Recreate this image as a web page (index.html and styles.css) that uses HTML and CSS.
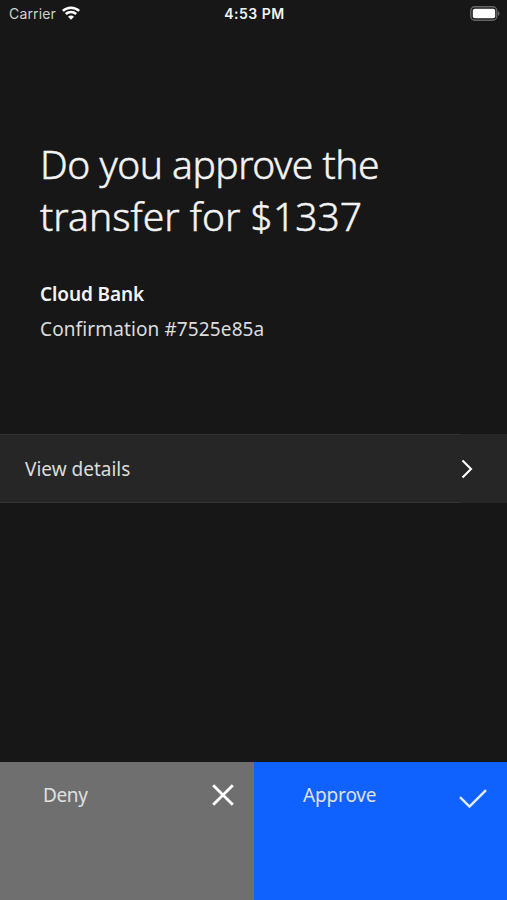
FILE: index.html
```html
<!DOCTYPE html>
<html lang="en">
<head>
    <meta charset="UTF-8">
    <meta name="viewport" content="width=device-width, initial-scale=1.0">
    <title>Approve transfer</title>
    <link rel="stylesheet" href="styles.css">
</head>
<body>
    <div class="screen">
        <div class="status-bar">
            <div class="carrier">
                <span class="carrier-name">Carrier</span>
                <svg class="wifi" width="18" height="14" viewBox="0 0 18 14">
                    <path d="M.8 4.9C5.3.6 12.7.6 17.2 4.9M3.8 8c3-2.8 7.4-2.8 10.4 0" fill="none" stroke="#fff" stroke-width="2.5"/>
                    <path d="M9 13.8L6 10.8c1.6-1.6 4.4-1.6 6 0z" fill="#fff"/>
                </svg>
            </div>
            <span class="time">4:53 PM</span>
            <svg class="battery" width="30" height="15" viewBox="0 0 30 15">
                <rect x=".8" y=".8" width="26" height="13.4" rx="4" fill="none" stroke="#666" stroke-width="1.4"/>
                <rect x="2.8" y="2.8" width="22.4" height="9.4" rx="2" fill="#fff"/>
                <path d="M28 5c2 .8 2 4.2 0 5z" fill="#666"/>
            </svg>
        </div>

        <div class="message">
            <h1><span class="line1">Do you approve the</span><br><span class="line2">transfer for $1337</span></h1>
            <h2>Cloud Bank</h2>
            <p>Confirmation #7525e85a</p>
        </div>

        <div class="details">
            <span class="details-label">View details</span>
            <svg width="12" height="20" viewBox="0 0 12 20">
                <path d="M1.5 1.5L10 10l-8.5 8.5" fill="none" stroke="#fff" stroke-width="2.1"/>
            </svg>
        </div>

        <div class="actions">
            <button class="deny">
                <span>Deny</span>
                <svg width="22" height="22" viewBox="0 0 22 22">
                    <path d="M1.2 1.2l19.6 19.6M20.8 1.2L1.2 20.8" fill="none" stroke="#fff" stroke-width="2.8"/>
                </svg>
            </button>
            <button class="approve">
                <span>Approve</span>
                <svg width="28" height="20" viewBox="0 0 28 20">
                    <path d="M1 8.2l9.5 9.4L27 1.2" fill="none" stroke="#e4ecff" stroke-width="2.5"/>
                </svg>
            </button>
        </div>
    </div>
</body>
</html>
```

FILE: styles.css
```css
body {
    margin: 0;
    background: #171717;
    color: #f3f3f3;
    font-family: "Noto Sans", sans-serif;
}
.screen {
    display: flex;
    flex-direction: column;
    height: 900px;
}
.status-bar {
    display: grid;
    grid-template-columns: 1fr auto 1fr;
    align-items: center;
    height: 26px;
    padding: 0 7px 0 9px;
    box-sizing: border-box;
    font-family: Inter, sans-serif;
    font-size: 14px;
}
.carrier {
    display: flex;
    align-items: center;
    gap: 6px;
}
.carrier-name {
    color: #d0d0d0;
    letter-spacing: 0.15px;
}
.time {
    font-weight: 600;
    letter-spacing: 0.5px;
}
.battery {
    justify-self: end;
}
.message {
    height: 408px;
    padding: 112px 40px 0;
    box-sizing: border-box;
}
h1 {
    margin: 0;
    font-size: 39px;
    font-weight: 300;
    line-height: 52px;
    white-space: nowrap;
    -webkit-text-stroke: 0.5px #f3f3f3;
}
.line1 {
    letter-spacing: -0.5px;
}
.line2 {
    letter-spacing: 0.05px;
}
h2 {
    margin: 34px 0 0;
    font-size: 19px;
    font-weight: 600;
    line-height: 36px;
    letter-spacing: -0.1px;
}
p {
    margin: 0;
    color: #dcdcdc;
    font-size: 19px;
    line-height: 35px;
    letter-spacing: 0.12px;
}
.details {
    display: flex;
    align-items: center;
    height: 69px;
    background: #262626;
    color: #dcdcdc;
    font-size: 19px;
}
.details-label {
    width: 461px;
    height: 69px;
    padding-left: 25px;
    box-sizing: border-box;
    border-top: 1px solid #323232;
    border-bottom: 1px solid #353535;
    line-height: 69px;
}
.actions {
    display: flex;
    height: 138px;
    margin-top: auto;
}
button {
    display: flex;
    align-items: flex-start;
    justify-content: space-between;
    border: none;
    color: #e0e0e0;
    font-family: inherit;
    font-size: 19px;
    line-height: 26px;
    cursor: pointer;
}
.deny {
    width: 254px;
    padding: 20px 20px 0 43px;
    background: #6f6f6f;
    letter-spacing: -0.4px;
}
.deny svg {
    margin-top: 2px;
}
.approve {
    flex: 1;
    padding: 20px 20px 0 49px;
    background: #0f62fe;
    letter-spacing: -0.15px;
}
.approve svg {
    margin-top: 7px;
}
```
